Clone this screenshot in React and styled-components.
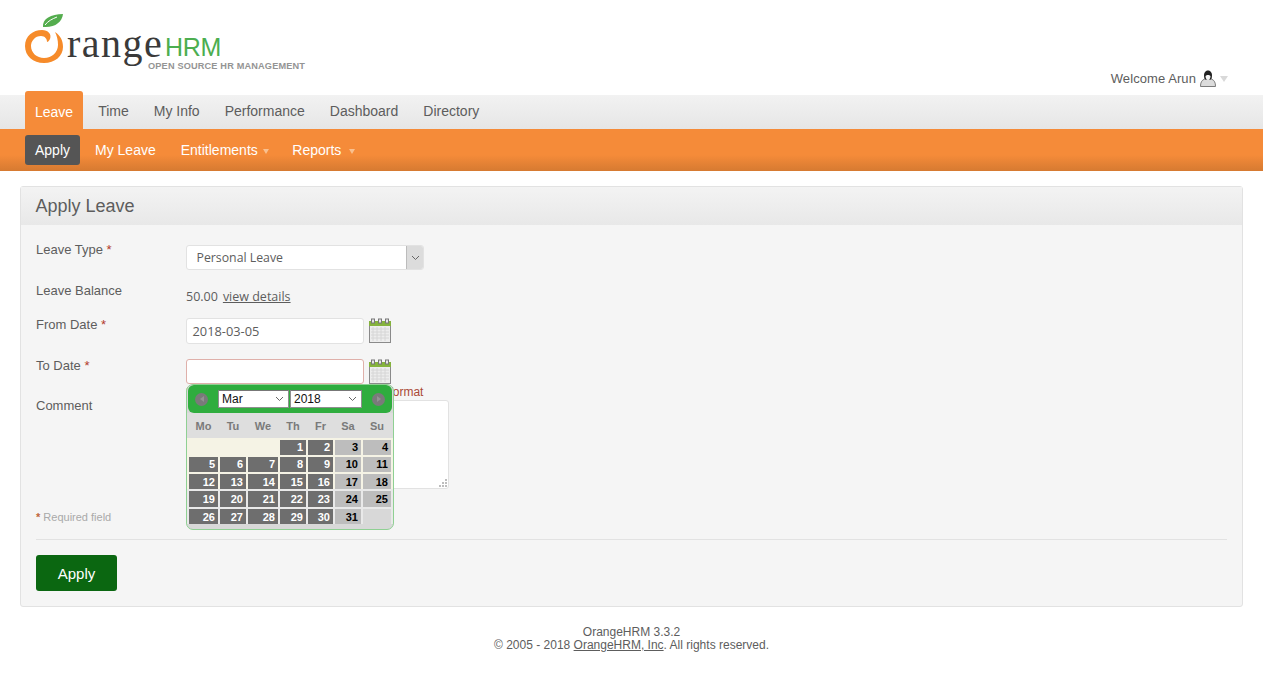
import React from "react"
import styled, { createGlobalStyle } from "styled-components"

const GlobalStyle = createGlobalStyle`
  html, body { margin: 0; padding: 0; background: #fff; }
  body { font-family: "Liberation Sans", Arial, sans-serif; font-size: 14px; color: #5d5d5d; }
  * { box-sizing: border-box; }
`

const Header = styled.header`
  height: 91px;
  padding: 0 35px 0 25px;
  display: flex;
  justify-content: space-between;
`
const LogoWrap = styled.div`
  width: 290px;
  height: 75px;
  margin-top: 8px;
`
const Welcome = styled.div`
  display: flex;
  align-items: center;
  gap: 4px;
  height: 24px;
  margin-top: 66px;
  color: #5d5d5d;
  font-size: 13px;
  letter-spacing: 0.08px;
`
const Caret = styled.span`
  width: 0;
  height: 0;
  border-left: ${p => p.$size}px solid transparent;
  border-right: ${p => p.$size}px solid transparent;
  border-top: ${p => p.$size + 2}px solid ${p => p.$color};
  margin-left: ${p => p.$gap}px;
  margin-top: 2px;
`
const MainMenu = styled.nav`
  height: 38px;
  padding: 0 25px;
  display: flex;
  align-items: flex-end;
  background: linear-gradient(#fff 0, #fff 4px, #f2f2f2 4px, #e6e6e6 100%);
`
const MainTab = styled.a`
  height: ${p => (p.$active ? 38 : 34)}px;
  padding: 0 ${p => (p.$active ? 10 : 12.5)}px;
  padding-top: ${p => (p.$active ? 3 : 0)}px;
  padding-bottom: ${p => (p.$active ? 0 : 2)}px;
  display: flex;
  align-items: center;
  border-radius: 3px 3px 0 0;
  font-size: 14px;
  background: ${p => (p.$active ? "#f58b39" : "transparent")};
  color: ${p => (p.$active ? "#fff" : "#5d5d5d")};
  margin-right: ${p => (p.$active ? 2.5 : 0)}px;
`
const SubMenu = styled.nav`
  height: 42px;
  padding: 6px 25px 0;
  display: flex;
  align-items: flex-start;
  background: linear-gradient(#f58b39 0, #f58b39 62%, #d67a31 100%);
`
const SubTab = styled.a`
  height: 30px;
  padding: 0 10px;
  margin-right: ${p => p.$right}px;
  display: flex;
  align-items: center;
  border-radius: 3px;
  font-size: 14px;
  color: #fff;
  background: ${p => (p.$active ? "#555" : "transparent")};
`
const Panel = styled.section`
  margin: 15px 20px 0;
  height: 421px;
  background: #f5f5f5;
  border: 1px solid #e2e2e2;
  border-radius: 3px;
`
const PanelHead = styled.h1`
  margin: 0;
  height: 38px;
  padding: 0 14.5px;
  display: flex;
  align-items: center;
  font-size: 18px;
  font-weight: 400;
  color: #5d5d5d;
  background: linear-gradient(#f3f3f3, #e8e8e8);
`
const Form = styled.div`
  padding: 20px 15px 0;
`
const Row = styled.div`
  display: grid;
  grid-template-columns: 150px 1fr;
  margin-bottom: ${p => p.$gap}px;
  min-height: ${p => p.$height}px;
`
const Label = styled.label`
  font-size: 13px;
  line-height: 16px;
  margin-top: ${p => p.$top || 0}px;
  color: #5d5d5d;
  b { color: #b23a2c; font-weight: 400; }
`
const SelectBox = styled.div`
  width: 238px;
  height: 25px;
  display: flex;
  background: #fff;
  border: 1px solid #e2e2e2;
  border-radius: 3px;
  overflow: hidden;
`
const SelectText = styled.span`
  flex: 1;
  padding-left: 9.5px;
  line-height: 24px;
  font-family: "Open Sans", "Noto Sans", sans-serif;
  font-size: 12.3px;
  color: #5d5d5d;
`
const SelectButton = styled.span`
  width: 17px;
  background: #dcdcdc;
  border-left: 1px solid #bcbcbc;
  display: flex;
  align-items: center;
  justify-content: center;
`
const Balance = styled.div`
  display: flex;
  gap: 5px;
  margin-top: 1px;
  line-height: 16px;
  font-family: "Open Sans", "Noto Sans", sans-serif;
  font-size: 12.5px;
  a { text-decoration: underline; }
`
const DateRow = styled.div`
  display: flex;
  align-items: flex-start;
  gap: 5px;
`
const DateInput = styled.div`
  width: 178px;
  height: ${p => p.$height}px;
  padding-left: 5.5px;
  line-height: 25px;
  background: #fff;
  border: 1px solid ${p => (p.$error ? "#dfb0aa" : "#e2e2e2")};
  border-radius: 3px;
  font-family: "Open Sans", "Noto Sans", sans-serif;
  font-size: 12.8px;
  color: #5d5d5d;
`
const DateField = styled.div`
  position: relative;
  z-index: 2;
  width: 300px;
`
const ErrorText = styled.div`
  height: 16px;
  font-size: 12px;
  line-height: 16px;
  color: #aa4935;
`
const Comment = styled.div`
  position: relative;
  width: 263px;
  height: 89px;
  background: #fff;
  border: 1px solid #e2e2e2;
  border-radius: 3px;
`
const Grip = styled.svg`
  position: absolute;
  right: 1px;
  bottom: 1px;
`
const Required = styled.div`
  margin-top: 22px;
  font-size: 11px;
  color: #a9a9a9;
  line-height: 12px;
  b { color: #c0653a; }
`
const Rule = styled.hr`
  margin: 16px 0 15px;
  border: 0;
  border-top: 1px solid #e2e2e2;
`
const ApplyButton = styled.button`
  width: 81px;
  height: 36px;
  padding: 0;
  border: 0;
  border-radius: 3px;
  background: #0b6711;
  color: #fff;
  font: 15px "Liberation Sans", Arial, sans-serif;
`
const Footer = styled.footer`
  margin-top: 19px;
  text-align: center;
  font-size: 12px;
  line-height: 13px;
  color: #5d5d5d;
  a { text-decoration: underline; }
`

/* datepicker popup sits over the form */
const Calendar = styled.div`
  position: absolute;
  left: 0;
  top: 25px;
  width: 208px;
  height: 146px;
  padding: 0 1px;
  border: 1px solid #8fd093;
  border-radius: 7px;
  background: #d8d8d8;
  overflow: hidden;
`
const CalHead = styled.div`
  height: 28px;
  border-radius: 6px;
  background: #2fad3e;
  display: flex;
  align-items: center;
  padding: 0 7px;
`
const CalNav = styled.span`
  width: 13px;
  height: 13px;
  border-radius: 50%;
  background: #7a7a7a;
  display: flex;
  align-items: center;
  justify-content: center;
  flex: none;
  &::after {
    content: "";
    border-top: 3px solid transparent;
    border-bottom: 3px solid transparent;
    border-${p => (p.$next ? "left" : "right")}: 4px solid #939393;
  }
`
const CalSelects = styled.div`
  flex: 1;
  display: flex;
  justify-content: center;
  gap: 1px;
`
const CalSelect = styled.div`
  width: ${p => p.$width}px;
  height: 18px;
  padding: 0 4px 0 3px;
  display: flex;
  align-items: center;
  justify-content: space-between;
  background: #fff;
  border: 1px solid #8f8f8f;
  border-top-color: #777;
  font-size: 12px;
  color: #111;
`
const DayGrid = styled.div`
  display: grid;
  grid-template-columns: 29px 26px 30px 26px 25px 26px 28px;
  gap: 2px;
`
const WeekHead = styled(DayGrid)`
  height: 25px;
  align-items: center;
  background: #dedede;
  margin: 0 -1px;
  padding: 0 2px;
  font-size: 11px;
  font-weight: 700;
  color: #7a7a7a;
  text-align: center;
`
const WeekBody = styled.div`
  display: flex;
  flex-direction: column;
  gap: 2px;
  margin: 0 -1px;
  padding: 2px 0 0 2px;
  background: linear-gradient(#f5f3e5 0, #f5f3e5 51px, #e9e9e9 51px, #e9e9e9 86px, #d8d8d8 86px);
`
const WeekRow = styled(DayGrid)`
  height: ${p => p.$height}px;
  grid-auto-rows: ${p => p.$height}px;
`
const Day = styled.span`
  background: ${p => (p.$blank ? p.$blank : p.$weekend ? "#bdbdbd" : "#6e6e6e")};
  color: ${p => (p.$weekend ? "#000" : "#fff")};
  font-size: 11px;
  font-weight: 700;
  line-height: ${p => p.$line}px;
  text-align: right;
  padding-right: 3px;
  overflow: hidden;
`

const Logo = () => (
  <svg width="290" height="75" viewBox="0 0 290 75">
    <path d="M18 19C17 11 26 6 38 6 37 14 30 20 18 19z" fill="#54ad4e" />
    <path d="M20 17C23 13 27 11 32 9" stroke="#fff" strokeWidth="1" fill="none" />
    <path
      d="M30 24C36 28 38 33 38 39 38 48 30 55 19 55 8 55 0 48 0 38 0 28 8 22 17 22 23 22 27 26 25 31 24 33 23 34 22 34 22 31 20 28 16 28 10 28 6 33 6 38 6 45 12 50 19 50 27 50 33 44 33 37 33 32 32 28 30 24z"
      fill="#f68b2a"
    />
    <text x="42" y="49" fontFamily="Liberation Serif, serif" fontSize="40" fill="#3a3a3a" letterSpacing="1.5">range</text>
    <text x="140" y="48" fontFamily="Liberation Sans, sans-serif" fontSize="25" fill="#4cae50" letterSpacing="-0.3">HRM</text>
    <text x="123" y="61" fontFamily="Liberation Sans, sans-serif" fontSize="9.2" fontWeight="700" fill="#949494" letterSpacing="0.16">OPEN SOURCE HR MANAGEMENT</text>
  </svg>
)

const UserIcon = () => (
  <svg width="16" height="17" viewBox="0 0 16 17">
    <path d="M.5 16.5c0-4 1-6 4-7.500h7c3 1.500 4 3.500 4 7.500z" fill="#dcdcdc" stroke="#7c7c7c" />
    <path d="M4 5.500C4 2 6 .5 8 .5s4 1.500 4 5c0 2-.5 3-1 4H5c-.5-1-1-2-1-4z" fill="#222" />
    <path d="M5.500 6c1-1.500 4-1.500 5 0 0 2-1 4-2.500 4S5.500 8 5.500 6z" fill="#f6f6f6" />
  </svg>
)

const CalendarIcon = () => (
  <svg width="22" height="25" viewBox="0 0 22 25" style={{ flex: "none" }}>
    <rect x="0.5" y="5" width="21" height="19.5" fill="#ededed" stroke="#8a8a8a" />
    <rect x="0" y="3" width="22" height="5" fill="#85b33c" />
    <path d="M2 11h18M2 14h18M2 17h18M2 20h18M4 9v14M8 9v14M12 9v14M16 9v14" fill="none" stroke="#d6d6d6" />
    <g fill="#e6e6e6" stroke="#777">
      <rect x="2.500" y="1" width="3" height="4" />
      <rect x="9.500" y="1" width="3" height="4" />
      <rect x="16.500" y="1" width="3" height="4" />
    </g>
  </svg>
)

const Chevron = () => (
  <svg width="9" height="6" viewBox="0 0 9 6">
    <path d="M1 1l3.500 3.500L8 1" fill="none" stroke="#666" strokeWidth="1" />
  </svg>
)

const weeks = [
  [null, null, null, 1, 2, 3, 4],
  [5, 6, 7, 8, 9, 10, 11],
  [12, 13, 14, 15, 16, 17, 18],
  [19, 20, 21, 22, 23, 24, 25],
  [26, 27, 28, 29, 30, 31, null],
]

const DatePicker = () => (
  <Calendar>
    <CalHead>
      <CalNav />
      <CalSelects>
        <CalSelect $width={71}>Mar <Chevron /></CalSelect>
        <CalSelect $width={72}>2018 <Chevron /></CalSelect>
      </CalSelects>
      <CalNav $next />
    </CalHead>
    <WeekHead>
      {["Mo", "Tu", "We", "Th", "Fr", "Sa", "Su"].map(d => <span key={d}>{d}</span>)}
    </WeekHead>
    <WeekBody>
      {weeks.map((week, w) => (
        <WeekRow key={w} $height={w === 3 ? 16 : 15}>
          {week.map((d, i) => (
            <Day
              key={i}
              $line={w < 2 ? 15 : 17}
              $blank={d ? null : w === 0 ? "transparent" : "#d8d8d8"}
              $weekend={i > 4}
            >
              {d}
            </Day>
          ))}
        </WeekRow>
      ))}
    </WeekBody>
  </Calendar>
)

export default function App() {
  return (
    <>
      <GlobalStyle />
      <Header>
        <LogoWrap><Logo /></LogoWrap>
        <Welcome>
          Welcome Arun <UserIcon /> <Caret $size={4.5} $color="#d9d9d9" $gap={0} />
        </Welcome>
      </Header>
      <MainMenu>
        <MainTab $active>Leave</MainTab>
        <MainTab>Time</MainTab>
        <MainTab>My Info</MainTab>
        <MainTab>Performance</MainTab>
        <MainTab>Dashboard</MainTab>
        <MainTab>Directory</MainTab>
      </MainMenu>
      <SubMenu>
        <SubTab $active $right={5}>Apply</SubTab>
        <SubTab $right={5}>My Leave</SubTab>
        <SubTab $right={3.5}>Entitlements <Caret $size={3} $color="#f9c08f" $gap={5} /></SubTab>
        <SubTab $right={0}>Reports <Caret $size={3} $color="#f9c08f" $gap={8} /></SubTab>
      </SubMenu>
      <Panel>
        <PanelHead>Apply Leave</PanelHead>
        <Form>
          <Row $height={25} $gap={18}>
            <Label $top={-3}>Leave Type <b>*</b></Label>
            <SelectBox>
              <SelectText>Personal Leave</SelectText>
              <SelectButton><Chevron /></SelectButton>
            </SelectBox>
          </Row>
          <Row $height={17} $gap={13}>
            <Label $top={-5}>Leave Balance</Label>
            <Balance>50.00 <a>view details</a></Balance>
          </Row>
          <Row $height={26} $gap={15}>
            <Label $top={-1}>From Date <b>*</b></Label>
            <DateRow>
              <DateInput $height={26}>2018-03-05</DateInput>
              <CalendarIcon />
            </DateRow>
          </Row>
          <Row $height={41} $gap={0}>
            <Label $top={-1}>To Date <b>*</b></Label>
            <DateField>
              <DateRow>
                <DateInput $height={25} $error />
                <CalendarIcon />
              </DateRow>
              <ErrorText>Should be a valid date in yyyy-mm-dd format</ErrorText>
              <DatePicker />
            </DateField>
          </Row>
          <Row $height={89} $gap={0}>
            <Label $top={-2}>Comment</Label>
            <Comment>
              <Grip width="9" height="9" viewBox="0 0 9 9">
                <path d="M7 1h2v2H7zM4 4h2v2H4zM7 4h2v2H7zM1 7h2v2H1zM4 7h2v2H4zM7 7h2v2H7z" fill="#bdbdbd" />
              </Grip>
            </Comment>
          </Row>
          <Required><b>*</b> Required field</Required>
          <Rule />
          <ApplyButton>Apply</ApplyButton>
        </Form>
      </Panel>
      <Footer>
        OrangeHRM 3.3.2
        <br />
        © 2005 - 2018 <a>OrangeHRM, Inc</a>. All rights reserved.
      </Footer>
    </>
  )
}
